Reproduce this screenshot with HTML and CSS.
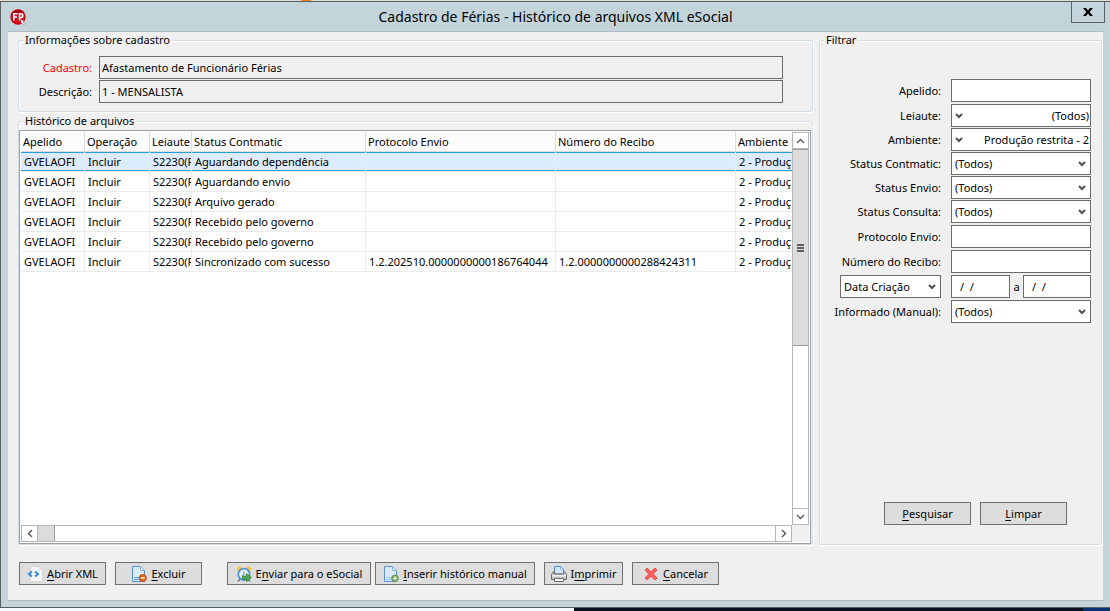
FILE: index.html
```html
<!DOCTYPE html>
<html lang="pt-BR">
<head>
<meta charset="utf-8">
<title>Cadastro de Férias - Histórico de arquivos XML eSocial</title>
<link rel="stylesheet" href="styles.css">
</head>
<body>
<div class="desktop-top"></div>
<main class="window">
  <header class="titlebar">
    <svg class="app-icon" viewBox="0 0 16 16" width="16" height="16" aria-hidden="true">
      <circle cx="8" cy="8" r="7.7" fill="#cf0a17"/>
      <path d="M1 6a7.7 7.7 0 0 1 13.600 -2c-4-1-9 0-13.600 2z" fill="#a50610"/>
      <path d="M3.800 11.500V4.800h3.700M3.800 8h3.200M9.500 11.500V4.800h1.300a1.900 1.900 0 0 1 0 3.900H9.500" fill="none" stroke="#fff" stroke-width="1.600"/>
      <path d="M10.500 10.500l4 1.500-1.500.8 2 2-1 1-2-2-.8 1.200z" fill="#fff" stroke="#8c4040" stroke-width=".4"/>
    </svg>
    <h1 class="title">Cadastro de Férias - Histórico de arquivos XML eSocial</h1>
    <button class="close" type="button" aria-label="Fechar">
      <svg viewBox="0 0 10 8" width="10" height="8" aria-hidden="true"><path d="M0 0h3l2 2.400L7 0h3L6.600 4 10 8H7L5 5.600 3 8H0l3.400-4z" fill="#000"/></svg>
    </button>
  </header>

  <div class="client">
    <div class="panels">
      <div class="left">
        <fieldset class="box info">
          <legend>Informações sobre cadastro</legend>
          <label class="required" for="cadastro">Cadastro:</label>
          <input class="field readonly" id="cadastro" type="text" value="Afastamento de Funcionário Férias" readonly>
          <label for="descricao">Descrição:</label>
          <input class="field readonly" id="descricao" type="text" value="1 - MENSALISTA" readonly>
        </fieldset>

        <fieldset class="box history">
          <legend>Histórico de arquivos</legend>
          <div class="grid-frame">
            <div class="grid-view">
              <table>
                <colgroup>
                  <col class="c-apelido"><col class="c-operacao"><col class="c-leiaute"><col class="c-status"><col class="c-protocolo"><col class="c-recibo"><col class="c-ambiente">
                </colgroup>
                <thead>
                  <tr><th>Apelido</th><th>Operação</th><th>Leiaute</th><th>Status Contmatic</th><th>Protocolo Envio</th><th>Número do Recibo</th><th>Ambiente</th></tr>
                </thead>
                <tbody>
                  <tr class="selected"><td>GVELAOFI</td><td>Incluir</td><td>S2230(F</td><td>Aguardando dependência</td><td></td><td></td><td>2 - Produç</td></tr>
                  <tr><td>GVELAOFI</td><td>Incluir</td><td>S2230(F</td><td>Aguardando envio</td><td></td><td></td><td>2 - Produç</td></tr>
                  <tr><td>GVELAOFI</td><td>Incluir</td><td>S2230(F</td><td>Arquivo gerado</td><td></td><td></td><td>2 - Produç</td></tr>
                  <tr><td>GVELAOFI</td><td>Incluir</td><td>S2230(F</td><td>Recebido pelo governo</td><td></td><td></td><td>2 - Produç</td></tr>
                  <tr><td>GVELAOFI</td><td>Incluir</td><td>S2230(F</td><td>Recebido pelo governo</td><td></td><td></td><td>2 - Produç</td></tr>
                  <tr><td>GVELAOFI</td><td>Incluir</td><td>S2230(F</td><td>Sincronizado com sucesso</td><td>1.2.202510.0000000000186764044</td><td>1.2.0000000000288424311</td><td>2 - Produç</td></tr>
                </tbody>
              </table>
            </div>
            <div class="vscroll">
              <button type="button" aria-label="Rolar para cima"><svg viewBox="0 0 9 6" width="9" height="6"><path d="M1 5l3.500-3.500L8 5" fill="none" stroke="#606060" stroke-width="1.500"/></svg></button>
              <div class="vtrack"><div class="vthumb"><i></i><i></i><i></i></div></div>
              <button type="button" aria-label="Rolar para baixo"><svg viewBox="0 0 9 6" width="9" height="6"><path d="M1 1l3.500 3.500L8 1" fill="none" stroke="#606060" stroke-width="1.500"/></svg></button>
            </div>
            <div class="hscroll">
              <button type="button" aria-label="Rolar para a esquerda"><svg viewBox="0 0 6 9" width="6" height="9"><path d="M5 1L1.500 4.500 5 8" fill="none" stroke="#606060" stroke-width="1.500"/></svg></button>
              <div class="htrack"><div class="hthumb"></div></div>
              <button type="button" aria-label="Rolar para a direita"><svg viewBox="0 0 6 9" width="6" height="9"><path d="M1 1l3.500 3.500L1 8" fill="none" stroke="#606060" stroke-width="1.500"/></svg></button>
            </div>
            <div class="corner"></div>
          </div>
        </fieldset>
      </div>

      <fieldset class="box filter">
        <legend>Filtrar</legend>
        <div class="rows">
          <div class="row"><label for="apelido">Apelido:</label><input class="field" id="apelido" type="text"></div>
          <div class="combos">
            <div class="row"><label for="leiaute">Leiaute:</label>
              <div class="combo reverse"><select class="field" id="leiaute"><option>(Todos)</option></select><svg viewBox="0 0 8 6" width="8" height="6"><path d="M1 1l3 3 3-3" fill="none" stroke="#505050" stroke-width="2"/></svg></div></div>
            <div class="row"><label for="ambiente">Ambiente:</label>
              <div class="combo reverse"><select class="field" id="ambiente"><option>Produção restrita - 2</option></select><svg viewBox="0 0 8 6" width="8" height="6"><path d="M1 1l3 3 3-3" fill="none" stroke="#505050" stroke-width="2"/></svg></div></div>
            <div class="row"><label for="contmatic">Status Contmatic:</label>
              <div class="combo"><select class="field" id="contmatic"><option>(Todos)</option></select><svg viewBox="0 0 8 6" width="8" height="6"><path d="M1 1l3 3 3-3" fill="none" stroke="#505050" stroke-width="2"/></svg></div></div>
            <div class="row"><label for="envio">Status Envio:</label>
              <div class="combo"><select class="field" id="envio"><option>(Todos)</option></select><svg viewBox="0 0 8 6" width="8" height="6"><path d="M1 1l3 3 3-3" fill="none" stroke="#505050" stroke-width="2"/></svg></div></div>
            <div class="row"><label for="consulta">Status Consulta:</label>
              <div class="combo"><select class="field" id="consulta"><option>(Todos)</option></select><svg viewBox="0 0 8 6" width="8" height="6"><path d="M1 1l3 3 3-3" fill="none" stroke="#505050" stroke-width="2"/></svg></div></div>
          </div>
          <div class="row"><label for="protocolo">Protocolo Envio:</label><input class="field" id="protocolo" type="text"></div>
          <div class="row"><label for="recibo">Número do Recibo:</label><input class="field" id="recibo" type="text"></div>
          <div class="row">
            <div class="combo date-kind"><select class="field" aria-label="Tipo de data"><option>Data Criação</option></select><svg viewBox="0 0 8 6" width="8" height="6"><path d="M1 1l3 3 3-3" fill="none" stroke="#505050" stroke-width="2"/></svg></div>
            <div class="dates">
              <input class="field date" type="text" aria-label="Data inicial" value="/  /">
              <label for="data-fim">a</label>
              <input class="field date" id="data-fim" type="text" value="/  /">
            </div>
          </div>
          <div class="row"><label for="manual">Informado (Manual):</label>
            <div class="combo"><select class="field" id="manual"><option>(Todos)</option></select><svg viewBox="0 0 8 6" width="8" height="6"><path d="M1 1l3 3 3-3" fill="none" stroke="#505050" stroke-width="2"/></svg></div></div>
        </div>
        <div class="filter-actions">
          <button class="btn" type="button"><span><u>P</u>esquisar</span></button>
          <button class="btn" type="button"><span><u>L</u>impar</span></button>
        </div>
      </fieldset>
    </div>

    <footer class="actions">
      <button class="btn" type="button">
        <svg viewBox="0 0 16 16" width="16" height="16" aria-hidden="true"><path d="M3.500.5h8l4 4v11h-12z" fill="#fafafa" stroke="#d2d4d6"/><path d="M11.500.5v4h4z" fill="#e2e4e6"/><path d="M5 5.500L2 8l3 2.500M8 5.500L11 8l-3 2.500" fill="none" stroke="#3d8fdc" stroke-width="2.200"/></svg>
        <span><u>A</u>brir XML</span>
      </button>
      <button class="btn" type="button">
        <svg viewBox="0 0 16 16" width="16" height="16" aria-hidden="true"><path d="M1.500.5h8l4 4v11h-12z" fill="#d9ebfb" stroke="#5b8fce"/><path d="M9.500.5v4h4z" fill="#fff" stroke="#8ab2e2"/><path d="M3 11h6v1H3zM3 13h6v1H3z" fill="#57a7e4"/><circle cx="11.800" cy="12" r="3.700" fill="#e2641b" stroke="#b5450c" stroke-width=".6"/><path d="M9.800 11.300h4v1.400h-4z" fill="#fff"/></svg>
        <span><u>E</u>xcluir</span>
      </button>
      <button class="btn send" type="button">
        <svg viewBox="0 0 16 16" width="16" height="16" aria-hidden="true"><circle cx="3.500" cy="3" r="2.600" fill="#f7c344"/><circle cx="12.500" cy="3" r="2.600" fill="#f7c344"/><path d="M4 13l-2 2.500M12 13l2 2.500" stroke="#777" stroke-width="1.500"/><circle cx="8" cy="8.300" r="5.700" fill="#edf5fd" stroke="#4f91d2" stroke-width="1.800"/><path d="M8 5v3.500L5.500 10" fill="none" stroke="#6f8ba8"/><path d="M6.500 10h4V7.500l5 4-5 4V13h-4z" fill="#56a84e" stroke="#277c25" stroke-width=".7"/></svg>
        <span>E<u>n</u>viar para o eSocial</span>
      </button>
      <button class="btn insert" type="button">
        <svg viewBox="0 0 16 16" width="16" height="16" aria-hidden="true"><path d="M1.500.5h8l4 4v11h-12z" fill="#d9ebfb" stroke="#5b8fce"/><path d="M9.500.5v4h4z" fill="#fff" stroke="#8ab2e2"/><path d="M3 11h6v1H3zM3 13h6v1H3z" fill="#8fc4ee"/><circle cx="12" cy="12.300" r="3.300" fill="#79a94f" stroke="#4c7d2d" stroke-width=".6"/><path d="M10 12.300h4M12 10.300v4" stroke="#fff" stroke-width="1.200"/></svg>
        <span><u>I</u>nserir histórico manual</span>
      </button>
      <button class="btn print" type="button">
        <svg viewBox="0 0 16 16" width="16" height="16" aria-hidden="true"><path d="M3.500 8V.5h6l3 3V8z" fill="#cfe6fb" stroke="#4a8bd8"/><path d="M9.500.5v3h3z" fill="#fff" stroke="#4a8bd8" stroke-width=".5"/><path d="M2.500 5.500h1V8h9V5.500h1l2 3v5h-15v-5z" fill="#c4c4c4" stroke="#6c6c6c"/><path d="M1 9h14v1.500H1z" fill="#f3f3f3"/><path d="M3.500 12.500h9v3h-9z" fill="#fff" stroke="#686868"/></svg>
        <span>I<u>m</u>primir</span>
      </button>
      <button class="btn" type="button">
        <svg viewBox="0 0 16 16" width="16" height="16" aria-hidden="true"><path d="M4 2l4 3.700L12 2l2 2-3.700 4L14 12l-2 2-4-3.700L4 14l-2-2 3.700-4L2 4z" fill="#fa5f5c" stroke="#e84442" stroke-width=".8" stroke-linejoin="round"/></svg>
        <span><u>C</u>ancelar</span>
      </button>
    </footer>
  </div>
</main>
<div class="desktop-bottom"></div>
</body>
</html>
```

FILE: styles.css
```css
* { box-sizing: border-box; }

body {
  margin: 0;
  min-height: 100vh;
  display: flex;
  flex-direction: column;
  font: 11px/14px "Noto Sans", "Open Sans", sans-serif;
  color: #000;
}

button, input, select { font: inherit; color: inherit; margin: 0; border-radius: 0; }
u { text-underline-offset: 2px; }

.desktop-top {
  height: 1px;
  background: linear-gradient(90deg, #deded6 300px, #ff8020 302px, #ff8020 310px, #deded6 312px);
}
.desktop-bottom {
  height: 3px;
  background: linear-gradient(90deg, #f4f8ff 574px, #0b1020 574px, #0b1020 1083px, #0a3272 1083px);
}

.window {
  flex: 1;
  display: flex;
  flex-direction: column;
  padding: 0 7px 6px 7px;
  background: #c3d5db;
  border: solid #5a5f63;
  border-width: 1px 0 1px 1px;
}

.titlebar {
  display: grid;
  grid-template-columns: 1fr auto 1fr;
  align-items: center;
  height: 29px;
}
.app-icon { margin-left: 2px; }
.title { margin: 0; font-size: 14px; line-height: 20px; font-weight: 400; }
.close {
  justify-self: end;
  align-self: start;
  display: grid;
  place-items: center;
  width: 34px;
  height: 21px;
  margin-right: -2px;
  padding: 0;
  background: none;
  border: 1px solid #5a5f6b;
  border-top: 0;
}

.client {
  flex: 1;
  display: flex;
  flex-direction: column;
  padding: 1px 0 15px 10px;
  background: #f0f0f0;
  border: solid #aebbc7;
  border-width: 1px 0;
}
.panels {
  flex: 1;
  display: grid;
  grid-template-columns: minmax(0, 1fr) 283px;
  gap: 6px;
  padding-right: 1px;
}
.left { display: flex; flex-direction: column; gap: 2px; min-width: 0; }

.box {
  min-width: 0;
  margin: 0;
  border: 1px solid #d3dee6;
  border-radius: 3px;
  box-shadow: inset 1px 1px #fff, 1px 1px #fff;
}
legend { margin-left: 4px; padding: 0 2px; height: 14px; background: #f0f0f0; }

.field {
  width: 100%;
  min-width: 0;
  height: 23px;
  padding: 0 3px;
  background: #fff;
  border: 1px solid #6b6b6b;
  outline: 0;
}
.readonly { background: #f0f0f0; padding: 0 2px; }

.info {
  display: grid;
  grid-template-columns: 73px 1fr;
  gap: 1px 7px;
  align-items: center;
  padding: 9px 29px 8px 0;
}
.info label { text-align: right; }
.info .required { color: #f00; }

.history { flex: 1; display: flex; padding: 2px 1px 0 0; }
.grid-frame {
  flex: 1;
  min-width: 0;
  display: grid;
  grid-template: minmax(0, 1fr) 17px / minmax(0, 1fr) 17px;
  padding: 1px;
  background: #fff;
  border: 1px solid #a0a0a4;
}
.grid-view { overflow: hidden; }

table { table-layout: fixed; width: 805px; border-collapse: separate; border-spacing: 0; }
.c-apelido { width: 64px; }
.c-operacao { width: 65px; }
.c-leiaute { width: 42px; }
.c-status { width: 174px; }
.c-protocolo { width: 190px; }
.c-recibo { width: 180px; }
.c-ambiente { width: 90px; }
th, td {
  height: 20px;
  padding: 0 0 0 3px;
  overflow: hidden;
  white-space: nowrap;
  text-align: left;
  font-weight: 400;
  border: solid #ececec;
  border-width: 0 1px 1px 0;
}
th {
  padding-left: 2px;
  background: #fcfcfc;
  border-color: #dcdcdc;
}
.selected td {
  background: #dcebfd;
  box-shadow: inset 0 1px #26a0da, inset 0 -1px #26a0da;
}

.vscroll, .hscroll { display: flex; background: #fff; border: solid #b5b5b5; }
.vscroll { flex-direction: column; border-width: 0 1px; }
.hscroll { border-width: 1px 0; }
.vscroll button, .hscroll button {
  display: grid;
  place-items: center;
  flex: none;
  padding: 0;
  background: #fff;
  border: solid #b5b5b5;
}
.vscroll button { height: 17px; border-width: 1px 0; }
.hscroll button { width: 17px; border-width: 0 1px; }
.vtrack, .htrack { flex: 1; }
.vthumb {
  height: 55%;
  display: flex;
  flex-direction: column;
  align-items: center;
  justify-content: center;
  gap: 1px;
  background: #dcdcdc;
  border: solid #9c9c9c;
  border-width: 1px 0;
}
.vthumb i { width: 7px; height: 2px; background: #606060; }
.hthumb { width: 17px; height: 100%; background: #dcdcdc; border-right: 1px solid #9c9c9c; }
.corner { background: #f0f0f0; }

.filter { display: flex; flex-direction: column; padding: 32px 10px 19px 0; }
.rows { display: flex; flex-direction: column; gap: 2px; }
.combos { display: flex; flex-direction: column; gap: 1px; }
.row {
  display: grid;
  grid-template-columns: minmax(0, 1fr) 140px;
  column-gap: 10px;
  align-items: center;
}
.row > label { text-align: right; }
.combo { position: relative; display: flex; }
.combo select { appearance: none; padding: 0 18px 0 3px; }
.combo svg { position: absolute; right: 5px; top: 9px; pointer-events: none; }
.reverse select { padding: 0 1px 0 18px; text-align: right; text-align-last: right; }
.reverse svg { right: auto; left: 4px; }
.date-kind { width: 101px; justify-self: end; }
.dates { display: grid; grid-template-columns: 59px 13px 68px; align-items: center; text-align: center; }
.date { padding: 0 8px; }
.filter-actions {
  display: flex;
  justify-content: flex-end;
  gap: 9px;
  margin-top: auto;
  padding-right: 24px;
}

.btn {
  display: flex;
  align-items: center;
  justify-content: center;
  gap: 4px;
  min-width: 87px;
  height: 23px;
  padding: 0 4px;
  white-space: nowrap;
  background: #ddd;
  border: 1px solid #707070;
}
.actions { display: flex; gap: 9px; padding: 17px 0 0 1px; }
.send { width: 144px; margin-left: 16px; }
.insert { width: 160px; margin-left: -5px; }
.print { min-width: 79px; }
```
